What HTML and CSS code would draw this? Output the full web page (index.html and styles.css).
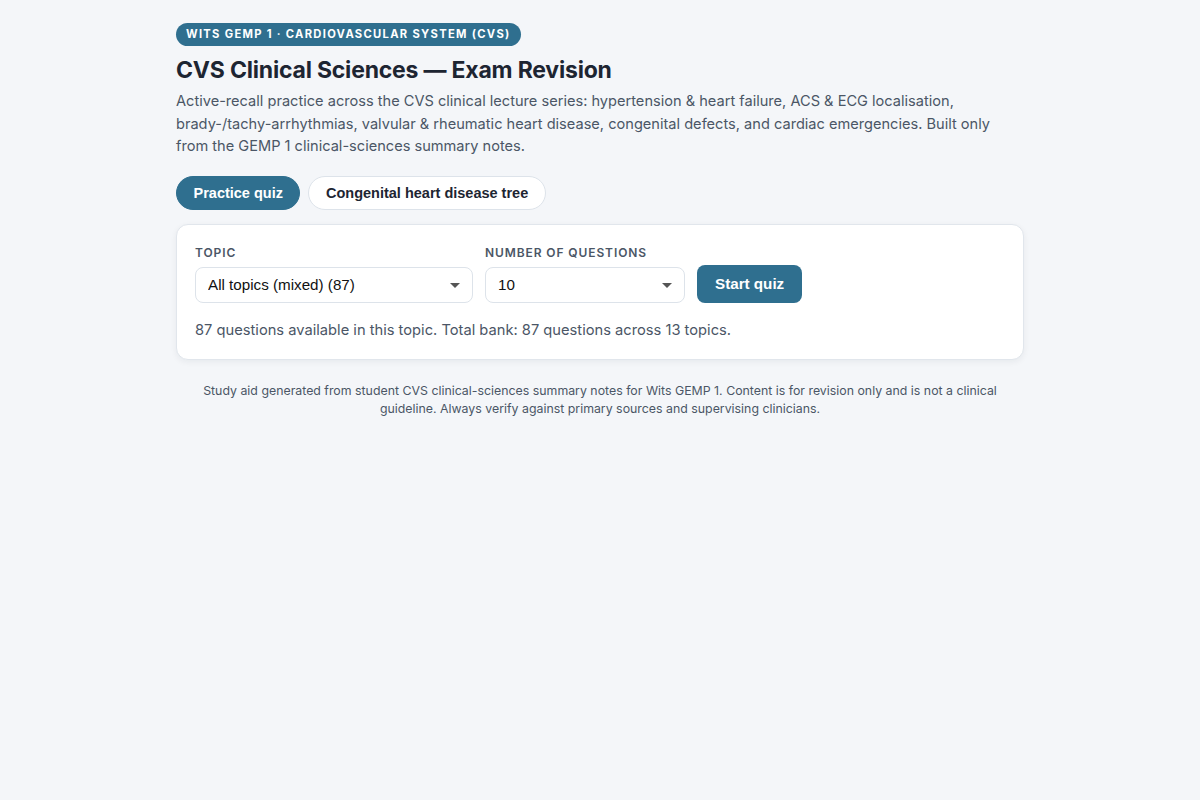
FILE: index.html
```html
<!DOCTYPE html>
<html lang="en">
<head>
    <meta charset="UTF-8">
    <meta name="viewport" content="width=device-width, initial-scale=1.0">
    <title>CVS Clinical Sciences — Exam Revision</title>
    <link rel="stylesheet" href="styles.css">
</head>
<body>
    <div class="container">
        <span class="badge">Wits GEMP 1 · Cardiovascular System (CVS)</span>
        <h1>CVS Clinical Sciences — Exam Revision</h1>
        <p class="intro">Active-recall practice across the CVS clinical lecture series: hypertension &amp; heart failure, ACS &amp; ECG localisation, brady-/tachy-arrhythmias, valvular &amp; rheumatic heart disease, congenital defects, and cardiac emergencies. Built only from the GEMP 1 clinical-sciences summary notes.</p>

        <div class="tabs">
            <button class="tab active">Practice quiz</button>
            <button class="tab">Congenital heart disease tree</button>
        </div>

        <div class="card">
            <div class="controls">
                <div class="field">
                    <label for="topic">Topic</label>
                    <div class="select-wrap topic">
                        <select id="topic">
                            <option>All topics (mixed) (87)</option>
                        </select>
                    </div>
                </div>
                <div class="field">
                    <label for="count">Number of questions</label>
                    <div class="select-wrap count">
                        <select id="count">
                            <option>10</option>
                            <option>20</option>
                            <option>30</option>
                        </select>
                    </div>
                </div>
                <button class="start">Start quiz</button>
            </div>
            <p class="info">87 questions available in this topic. Total bank: 87 questions across 13 topics.</p>
        </div>

        <p class="footer">Study aid generated from student CVS clinical-sciences summary notes for Wits GEMP 1. Content is for revision only and is not a clinical guideline. Always verify against primary sources and supervising clinicians.</p>
    </div>
</body>
</html>
```

FILE: styles.css
```css
body {
    margin: 0;
    background: #f4f6f9;
    font-family: Inter, "Noto Sans", sans-serif;
    color: #1d2532;
}
.container {
    width: 848px;
    margin: 0 auto;
    padding-top: 22px;
}
.badge {
    display: inline-block;
    background: #2f6f8f;
    color: #fff;
    font-size: 11.2px;
    font-weight: 700;
    letter-spacing: 1.3px;
    text-transform: uppercase;
    padding: 0 10px;
    height: 23px;
    line-height: 23px;
    border-radius: 12px;
}
h1 {
    font-size: 23px;
    font-weight: 700;
    margin: 9px 0 5px;
    line-height: 30px;
    color: #1d2532;
    letter-spacing: -0.2px;
}
.intro {
    margin: 0;
    font-size: 14.6px;
    line-height: 22.5px;
    color: #4b5666;
}
.tabs {
    display: flex;
    gap: 8px;
    margin-top: 18px;
}
.tab {
    font-family: "Liberation Sans", Arial, sans-serif;
    font-size: 14.5px;
    font-weight: 700;
    height: 34px;
    padding: 0 16.5px;
    border-radius: 17px;
    border: 1px solid #dde3ea;
    background: #fff;
    color: #1d2532;
    cursor: pointer;
}
.tab.active {
    background: #2f6f8f;
    border-color: #2f6f8f;
    color: #fff;
}
.card {
    margin-top: 14px;
    background: #fff;
    border: 1px solid #e1e6ec;
    border-radius: 12px;
    box-shadow: 0 2px 6px rgba(20, 30, 50, 0.06);
    padding: 20px 18px 19px;
}
.controls {
    display: flex;
    align-items: flex-end;
    gap: 12px;
}
.field label {
    display: block;
    font-size: 12px;
    font-weight: 600;
    letter-spacing: 0.9px;
    text-transform: uppercase;
    color: #4b5666;
    margin-bottom: 7px;
}
.select-wrap {
    position: relative;
}
.select-wrap.topic {
    width: 278px;
}
.select-wrap.count {
    width: 200px;
}
.select-wrap::after {
    content: "";
    position: absolute;
    right: 13px;
    top: 16px;
    border-left: 5px solid transparent;
    border-right: 5px solid transparent;
    border-top: 5px solid #555;
    pointer-events: none;
}
select {
    appearance: none;
    -webkit-appearance: none;
    display: block;
    width: 100%;
    height: 36px;
    padding: 0 30px 0 12px;
    border: 1px solid #dde3ea;
    border-radius: 8px;
    background: #fff;
    font-family: "Liberation Sans", Arial, sans-serif;
    font-size: 15.2px;
    color: #111;
}
.start {
    font-family: "Liberation Sans", Arial, sans-serif;
    font-size: 15.2px;
    font-weight: 700;
    height: 38px;
    padding: 0 18px;
    border: none;
    border-radius: 8px;
    background: #2f6f8f;
    color: #fff;
    cursor: pointer;
}
.info {
    margin: 17px 0 0;
    font-size: 14.7px;
    color: #4b5666;
    line-height: 20px;
}
.footer {
    margin: 22px 0 0;
    text-align: center;
    font-size: 12.35px;
    line-height: 18.5px;
    color: #4b5666;
    padding: 0 18px;
}
```
